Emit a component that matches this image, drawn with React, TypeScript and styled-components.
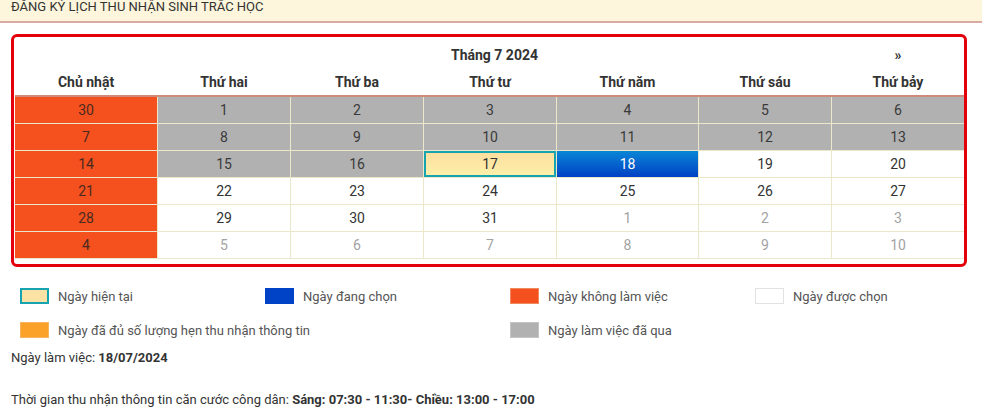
import React from "react";
import styled, { createGlobalStyle, css } from "styled-components";

const GlobalStyle = createGlobalStyle`
  html, body { margin: 0; padding: 0; background: #ffffff; }
  body { font-family: Roboto, "Noto Sans", "Liberation Sans", sans-serif; color: #333; }
  * { box-sizing: border-box; }
`;

const TitleBar = styled.div`
  height: 23px;
  background: #fdf6dc;
  border-bottom: 2px solid #d9aaa3;
  padding: 0 11px;
  font-size: 13px;
  line-height: 14px;
  color: #333;
  text-transform: uppercase;
  white-space: nowrap;
  overflow: hidden;
`;

const Page = styled.div`
  padding: 11px 15px 0 11px;
`;

const CalendarBox = styled.div`
  border: 3px solid #e3000b;
  border-radius: 6px;
  padding: 0 0 5px 1px;
`;

const COLS = "142px 132px 132px 132px 141px 132px 132px";

const MonthRow = styled.div`
  display: grid;
  grid-template-columns: ${COLS};
  column-gap: 1px;
  height: 30px;
  padding-top: 6px;
  align-items: center;
  font-weight: 700;
  font-size: 14px;
  color: #333;
`;

const MonthTitle = styled.div`
  grid-column: 2 / span 5;
  text-align: center;
`;

const NextArrow = styled.div`
  grid-column: 7;
  text-align: center;
  font-size: 14px;
`;

const DayHeader = styled.div`
  display: grid;
  grid-template-columns: ${COLS};
  column-gap: 1px;
  height: 30px;
  padding-top: 1px;
  align-items: center;
  border-bottom: 2px solid #cf8a7a;
  font-weight: 700;
  font-size: 14px;
  color: #333;
`;

const DayName = styled.div`
  text-align: center;
`;

const Grid = styled.div`
  display: grid;
  grid-template-columns: ${COLS};
  grid-auto-rows: 26px;
  gap: 1px;
  background: #ebe7ca;
  border-bottom: 1px solid #ebe7ca;
`;

type Kind = "off" | "past" | "today" | "selected" | "free" | "other";

const Cell = styled.div<{ $kind: Kind }>`
  display: flex;
  align-items: center;
  justify-content: center;
  font-size: 14px;
  color: #333;
  background: #ffffff;
  ${({ $kind }) =>
    $kind === "off" &&
    css`
      background: #f4511e;
      color: #4a2a20;
    `}
  ${({ $kind }) =>
    $kind === "past" &&
    css`
      background: #b1b1b1;
      color: #3a3a3a;
    `}
  ${({ $kind }) =>
    $kind === "today" &&
    css`
      background: linear-gradient(#fddf9f, #fdf0a9);
      border: 2px solid #17a4b1;
      color: #333;
    `}
  ${({ $kind }) =>
    $kind === "selected" &&
    css`
      background: linear-gradient(#0a86d6, #0041c4);
      color: #ffffff;
    `}
  ${({ $kind }) =>
    $kind === "other" &&
    css`
      color: #a3a3a3;
    `}
`;

const Legend = styled.div`
  display: grid;
  grid-template-columns: repeat(4, 245px);
  row-gap: 18px;
  margin: 21px 0 0 9px;
`;

const LegendItem = styled.div`
  display: flex;
  align-items: center;
  gap: 9px;
  height: 16px;
  font-size: 13px;
  color: #555;
  white-space: nowrap;
`;

const Swatch = styled.span<{ $bg: string; $border?: string; $bw?: number }>`
  display: inline-block;
  flex: 0 0 29px;
  width: 29px;
  height: 16px;
  background: ${({ $bg }) => $bg};
  border: ${({ $border, $bw }) => ($border ? `${$bw ?? 1}px solid ${$border}` : "none")};
`;

const InfoLine = styled.div<{ $mt: number }>`
  margin-top: ${({ $mt }) => $mt}px;
  font-size: 13px;
  line-height: 16px;
  color: #333;
  white-space: nowrap;
`;

const Strong = styled.b`
  font-weight: 700;
`;

const dayNames = ["Chủ nhật", "Thứ hai", "Thứ ba", "Thứ tư", "Thứ năm", "Thứ sáu", "Thứ bảy"];

type D = { n: number; k: Kind };

const weeks: D[][] = (() => {
  const list: D[] = [];
  list.push({ n: 30, k: "off" });
  for (let d = 1; d <= 31; d++) {
    const idx = list.length;
    const dow = idx % 7;
    let k: Kind = "free";
    if (dow === 0) k = "off";
    else if (d < 17) k = "past";
    else if (d === 17) k = "today";
    else if (d === 18) k = "selected";
    list.push({ n: d, k });
  }
  let d = 1;
  while (list.length < 42) {
    const dow = list.length % 7;
    list.push({ n: d++, k: dow === 0 ? "off" : "other" });
  }
  const out: D[][] = [];
  for (let i = 0; i < 6; i++) out.push(list.slice(i * 7, i * 7 + 7));
  return out;
})();

const legend = [
  { label: "Ngày hiện tại", bg: "#fde2a6", border: "#17a4b1", bw: 2 },
  { label: "Ngày đang chọn", bg: "#0043c6" },
  { label: "Ngày không làm việc", bg: "#f4511e", border: "#f08a60", bw: 1 },
  { label: "Ngày được chọn", bg: "#ffffff", border: "#e2e2e2", bw: 1 },
  { label: "Ngày đã đủ số lượng hẹn thu nhận thông tin", bg: "#fba129", border: "#f6b45c", bw: 1 },
  { label: "", bg: "" },
  { label: "Ngày làm việc đã qua", bg: "#b1b1b1", border: "#c4c4c4", bw: 1 },
];

export default function App() {
  return (
    <>
      <GlobalStyle />
      <TitleBar>Đăng ký lịch thu nhận sinh trắc học</TitleBar>
      <Page>
        <CalendarBox>
          <MonthRow>
            <MonthTitle>Tháng 7 2024</MonthTitle>
            <NextArrow>»</NextArrow>
          </MonthRow>
          <DayHeader>
            {dayNames.map((n) => (
              <DayName key={n}>{n}</DayName>
            ))}
          </DayHeader>
          <Grid>
            {weeks.flat().map((d, i) => (
              <Cell key={i} $kind={d.k}>
                {d.n}
              </Cell>
            ))}
          </Grid>
        </CalendarBox>
        <Legend>
          {legend.map((l, i) =>
            l.label ? (
              <LegendItem key={i}>
                <Swatch $bg={l.bg} $border={l.border} $bw={l.bw} />
                {l.label}
              </LegendItem>
            ) : (
              <div key={i} />
            )
          )}
        </Legend>
        <InfoLine $mt={12}>
          Ngày làm việc: <Strong>18/07/2024</Strong>
        </InfoLine>
        <InfoLine $mt={26}>
          Thời gian thu nhận thông tin căn cước công dân:{" "}
          <Strong>Sáng: 07:30 - 11:30- Chiều: 13:00 - 17:00</Strong>
        </InfoLine>
      </Page>
    </>
  );
}
